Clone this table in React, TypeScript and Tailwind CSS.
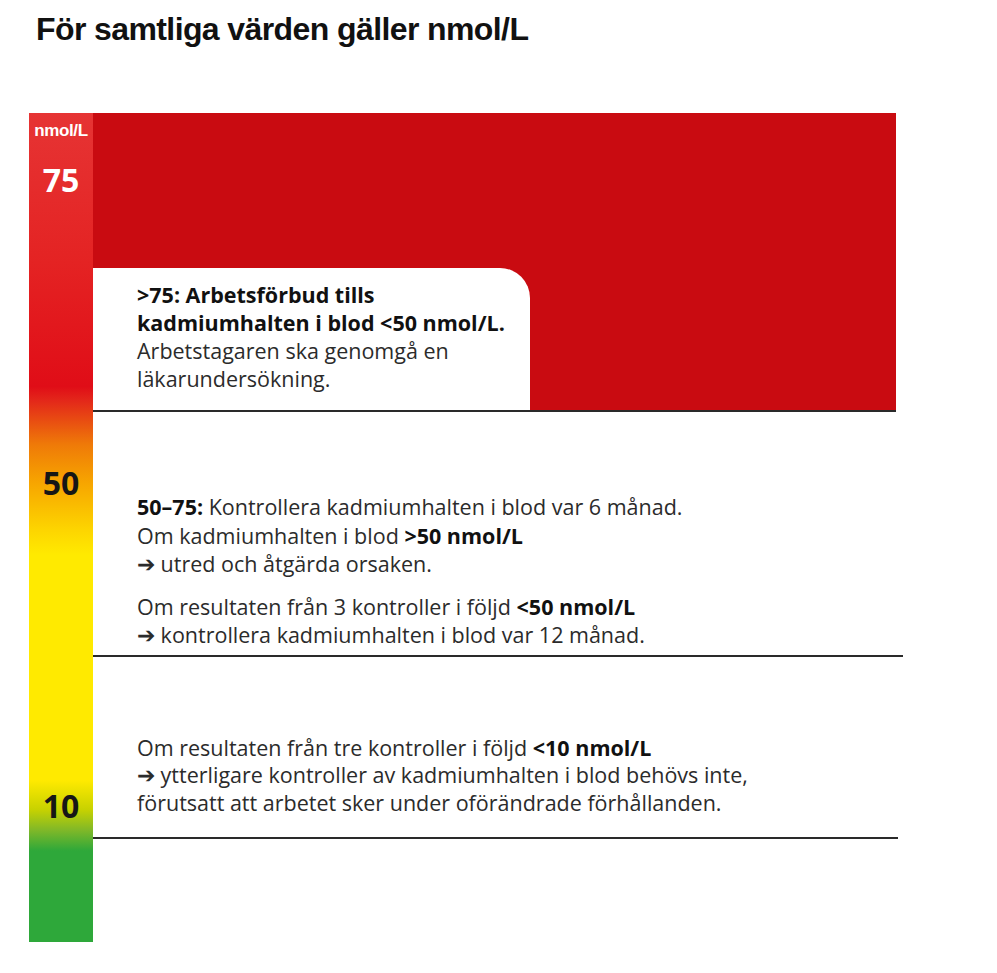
export default function App() {
  return (
    <div className="min-h-[973px] w-[997px] bg-white" style={{ fontFamily: '"Open Sans", "Liberation Sans", sans-serif' }}>
      {/* Title */}
      <h1
        className="pl-[36px] pt-[11px] text-[32px] font-bold leading-[36px] tracking-[-0.6px] text-[#111]"
        style={{ fontFamily: '"Liberation Sans", Arial, sans-serif' }}
      >
        För samtliga värden gäller nmol/L
      </h1>

      <div className="mt-[66px] flex pl-[29px]">
        {/* Scale bar */}
        <div className="flex h-[829px] w-[64px] flex-col items-center bg-[linear-gradient(to_bottom,#e63434_0%,#e42323_18%,#e00d17_33%,#e3261a_34.6%,#ef7a08_40%,#f7a500_44.6%,#fdd500_50.3%,#ffea00_53.3%,#ffea00_80.5%,#c8d200_84%,#80b828_86.5%,#2ea83a_89%,#2ea83a_100%)]">
          <span
            className="mt-[8px] text-[17px] font-bold leading-[20px] tracking-[-0.4px] text-white"
            style={{ fontFamily: '"Liberation Sans", Arial, sans-serif' }}
          >
            nmol/L
          </span>
          <span className="mt-[21px] text-[32px] font-bold leading-[36px] text-white">75</span>
          <span className="mt-[267px] text-[32px] font-bold leading-[36px] text-[#161616]">50</span>
          <span className="mt-[287px] text-[32px] font-bold leading-[36px] text-[#161616]">10</span>
        </div>

        {/* Sections */}
        <div className="flex flex-col text-[21.5px] leading-[28px] text-[#2b2b2b]">
          {/* >75 */}
          <div className="flex h-[299px] w-[803px] flex-col justify-end border-b-2 border-[#2a2a2a] bg-[#c90b11]">
            <div className="h-[142px] w-[437px] rounded-tr-[30px] bg-white pl-[44px] pt-[13px]">
              <p className="font-bold text-[#111]">
                &gt;75: Arbetsförbud tills
                <br />
                kadmiumhalten i blod &lt;50 nmol/L.
              </p>
              <p>
                Arbetstagaren ska genomgå en
                <br />
                läkarundersökning.
              </p>
            </div>
          </div>

          {/* 50–75 */}
          <div className="w-[810px] border-b-2 border-[#2a2a2a] pb-[5px] pl-[44px] pt-[81px] leading-[28.5px]">
            <p>
              <b className="text-[#111]">50–75:</b> Kontrollera kadmiumhalten i blod var 6 månad.
              <br />
              Om kadmiumhalten i blod <b className="text-[#111]">&gt;50 nmol/L</b>
              <br />➔ utred och åtgärda orsaken.
            </p>
            <p className="mt-[14px]">
              Om resultaten från 3 kontroller i följd <b className="text-[#111]">&lt;50 nmol/L</b>
              <br />➔ kontrollera kadmiumhalten i blod var 12 månad.
            </p>
          </div>

          {/* <10 */}
          <div className="w-[805px] border-b-2 border-[#2a2a2a] pb-[21px] pl-[44px] pt-[77px] leading-[27.5px]">
            <p>
              Om resultaten från tre kontroller i följd <b className="text-[#111]">&lt;10 nmol/L</b>
              <br />➔ ytterligare kontroller av kadmiumhalten i blod behövs inte,
              <br />
              förutsatt att arbetet sker under oförändrade förhållanden.
            </p>
          </div>
        </div>
      </div>
    </div>
  );
}
